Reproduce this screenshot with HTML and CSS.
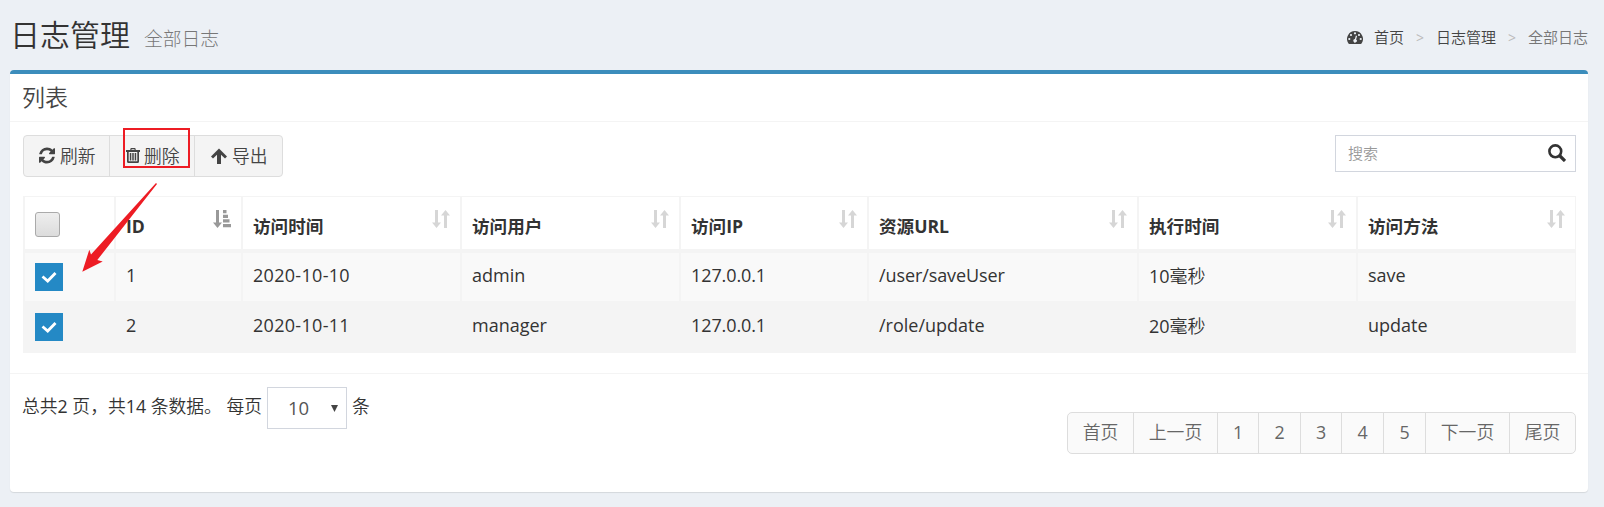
FILE: index.html
```html
<!DOCTYPE html>
<html lang="zh-CN">
<head>
<meta charset="utf-8">
<title>日志管理</title>
<link rel="stylesheet" href="styles.css">
</head>
<body>
<svg class="defs" width="0" height="0">
  <symbol id="sort" viewBox="0 0 18 18"><path d="M3 0h3v12.500h3L4.500 18 0 12.500h3zM12 18h3V5.500h3L13.500 0 9 5.500h3z"/></symbol>
  <symbol id="sorted" viewBox="0 0 18 18"><path d="M3 0h3v12.500h3L4.500 18 0 12.500h3zM10 0h3.500v3.300H10zM10 4.700h5V8h-5zM10 9.300h6.500v3.300H10zM10 14h8v3.300h-8z"/></symbol>
  <symbol id="tick" viewBox="0 0 28 28"><path d="M7.500 13.500l5.200 4.500L20.500 10" fill="none" stroke="#fff" stroke-width="2.800"/></symbol>
</svg>
<header class="page-head">
  <h1>日志管理<small>全部日志</small></h1>
  <nav class="crumbs">
    <svg class="dash" viewBox="0 0 16 13"><path fill="#444" fill-rule="evenodd" d="M8 0a8 8 0 0 1 6.700 12.300q-.4.700-1 .7H2.300q-.6 0-1-.7A8 8 0 0 1 8 0zM8 1.200a1.100 1.100 0 1 0 0 2.200 1.100 1.100 0 0 0 0-2.200zM4 2.900a1.100 1.100 0 1 0 0 2.200 1.100 1.100 0 0 0 0-2.200zM12 2.900a1.100 1.100 0 1 0 0 2.200 1.100 1.100 0 0 0 0-2.200zM2.300 6.900a1.100 1.100 0 1 0 0 2.200 1.100 1.100 0 0 0 0-2.200zM13.700 6.900a1.100 1.100 0 1 0 0 2.200 1.100 1.100 0 0 0 0-2.200zM8.900 4.600l-1 3.500a1.700 1.700 0 1 0 1.200.3l1-3.500z"/></svg>
    <a>首页</a><i>&gt;</i><a>日志管理</a><i>&gt;</i><span>全部日志</span>
  </nav>
</header>
<main class="box">
  <h2>列表</h2>
  <div class="body">
    <div class="tools">
      <div class="buttons">
        <button class="b1"><svg viewBox="0 0 1536 1792"><path d="M1511 1056q0 5-1 7-64 268-268 434.500t-478 166.500q-146 0-282.500-55t-243.500-157l-129 129q-19 19-45 19t-45-19-19-45v-448q0-26 19-45t45-19h448q26 0 45 19t19 45-19 45l-137 137q71 66 161 102t187 36q134 0 250-65t186-179q11-17 53-117 8-23 30-23h192q13 0 22.500 9.500t9.500 22.500zm25-800v448q0 26-19 45t-45 19h-448q-26 0-45-19t-19-45 19-45l138-138q-148-137-349-137-134 0-250 65t-186 179q-11 17-53 117-8 23-30 23h-199q-13 0-22.500-9.500t-9.500-22.500v-7q65-268 270-434.500t480-166.500q146 0 284 55.500t245 156.500l130-129q19-19 45-19t45 19 19 45z"/></svg>刷新</button>
        <button class="b2"><svg viewBox="0 0 14 18"><path fill-rule="evenodd" d="M4.300 3V2.200Q4.300 1 5.500 1h3q1.200 0 1.200 1.200V3H14v2h-1v9.500q0 1.500-1.500 1.500h-9Q1 16 1 14.500V5H0V3zM5.500 3h3v-.8h-3zM2.700 5v9.300h8.600V5z"/><path d="M3.800 6h1.500v7.500H3.800zM6.250 6h1.500v7.500h-1.500zM8.700 6h1.500v7.500H8.700z"/></svg>删除</button>
        <button class="b3"><svg viewBox="0 0 16 18"><path d="M8 1.500l8 8-2 2-4-3.700V17H6V7.800L2 11.500l-2-2z"/></svg>导出</button>
      </div>
      <label class="search"><input placeholder="搜索"><svg viewBox="0 0 18 18"><circle cx="7.300" cy="7.300" r="5.900" fill="none" stroke="#333" stroke-width="2.600"/><path d="M11.500 11.500l5.500 5.500" stroke="#333" stroke-width="3.200"/></svg></label>
    </div>
    <table>
      <colgroup><col class="c91"><col class="c127"><col class="c219"><col class="c219"><col class="c188"><col class="c270"><col class="c219"><col></colgroup>
      <thead><tr>
        <th><span class="check"></span></th>
        <th>ID<svg class="on"><use href="#sorted"/></svg></th>
        <th>访问时间<svg><use href="#sort"/></svg></th>
        <th>访问用户<svg><use href="#sort"/></svg></th>
        <th>访问IP<svg><use href="#sort"/></svg></th>
        <th>资源URL<svg><use href="#sort"/></svg></th>
        <th>执行时间<svg><use href="#sort"/></svg></th>
        <th>访问方法<svg><use href="#sort"/></svg></th>
      </tr></thead>
      <tbody>
        <tr><td><svg class="tick"><use href="#tick"/></svg></td><td>1</td><td class="date">2020-10-10</td><td>admin</td><td class="ip">127.0.0.1</td><td class="url">/user/saveUser</td><td class="ms">10<span>毫秒</span></td><td>save</td></tr>
        <tr><td><svg class="tick"><use href="#tick"/></svg></td><td>2</td><td class="date">2020-10-11</td><td>manager</td><td class="ip">127.0.0.1</td><td>/role/update</td><td class="ms">20<span>毫秒</span></td><td>update</td></tr>
      </tbody>
    </table>
  </div>
  <footer>
    <div class="summary"><span>总共<b>2</b> 页，共<b>14</b> 条数据。 每页</span><span class="select">10<svg viewBox="0 0 7 7"><path d="M0 0h7L3.500 7z"/></svg></span><span>条</span></div>
    <div class="pages"><a class="p1">首页</a><a class="p2">上一页</a><a class="n1">1</a><a class="n2">2</a><a class="n1">3</a><a class="n2">4</a><a class="n2">5</a><a class="p2">下一页</a><a class="p4">尾页</a></div>
  </footer>
</main>
<svg class="marks" viewBox="0 0 200 160"><rect x="24" y="9" width="65" height="38" fill="none" stroke="#ed1c24" stroke-width="2"/><path fill="#ed1c24" d="M56 63l1 1L-2.700 140l5.400 1.500-20.400 10.200 7-22 1.700 4.800z"/></svg>
</body>
</html>
```
FILE: styles.css
```css
* { box-sizing: border-box; }
body {
  margin: 0;
  height: 507px;
  overflow: hidden;
  background: #ecf0f5;
  color: #333;
  font: 18px "Open Sans", "Noto Sans CJK SC", sans-serif;
  padding: 0 16px 0 10px;
}
.defs { position: absolute; }
.page-head { height: 70px; display: flex; justify-content: space-between; }
h1 { margin: 13px 0 0; font-size: 30px; line-height: 44px; font-weight: 350; }
small { margin-left: 14px; font-size: 18.750px; font-weight: 300; color: #777; }
.crumbs { display: flex; align-items: center; height: 24px; margin-top: 24px; font-size: 15px; font-weight: 350; color: #777; }
.crumbs a { color: #444; }
.crumbs i { width: 32px; padding-top: 2px; text-align: center; font-style: normal; font-size: 14px; font-weight: 400; color: #bbb; }
.dash { width: 16px; height: 13px; margin: 3px 11px 0 0; }
.box { height: 422px; border-top: 4px solid #3c8dbc; border-radius: 4px; background: #fff; box-shadow: 0 1px 1px rgba(0,0,0,.1); }
h2 { margin: 0; height: 48px; padding: 10px 12px 0; border-bottom: 1px solid #f4f4f4; font-size: 23px; line-height: 27px; font-weight: 350; color: #444; }
.body { height: 252px; padding: 13px 12px 0 13px; border-bottom: 1px solid #f4f4f4; }
.tools { display: flex; justify-content: space-between; height: 61px; }
.buttons { display: flex; height: 42px; border: 1px solid #ddd; border-radius: 4px; background: #f4f4f4; overflow: hidden; }
button { display: flex; align-items: center; height: 40px; padding: 0 0 3px 15px; border: 0; border-right: 1px solid #ddd; background: none; color: #444; font: 350 17.800px "Open Sans", "Noto Sans CJK SC", sans-serif; }
button svg { position: relative; top: 1px; fill: #444; }
.b1 { width: 86px; }
.b2 { width: 85px; }
.b3 { width: 87px; border: 0; padding-left: 16px; }
.b1 svg { width: 16px; height: 19px; margin-right: 5px; }
.b2 svg { width: 14px; height: 18px; margin: 1px 4px 0 1px; }
.b3 svg { width: 16px; height: 18px; margin-right: 5px; }
.search { display: flex; align-items: center; justify-content: space-between; width: 241px; height: 37px; padding: 0 9px 2px 12px; border: 1px solid #d2d6de; }
.search input { width: 180px; padding: 0; border: 0; outline: 0; font: 350 15px "Noto Sans CJK SC", sans-serif; }
.search input::placeholder { color: #999; }
.search svg { width: 18px; height: 18px; }
table { width: 1553px; table-layout: fixed; border-spacing: 0; border: solid #f4f4f4; border-width: 1px 1px 0 0; }
.c91 { width: 91px; } .c127 { width: 127px; } .c219 { width: 219px; } .c188 { width: 188px; } .c270 { width: 270px; }
th, td { padding: 0 0 0 10px; border-left: 2px solid #f4f4f4; text-align: left; }
th { position: relative; height: 56px; padding-top: 5px; border-bottom: 4px solid #f4f4f4; font-size: 17.600px; font-weight: 700; }
th svg { position: absolute; right: 10px; top: 13px; width: 18px; height: 18px; fill: #d6d6d6; }
th svg.on { fill: #999; }
.check { display: block; width: 25px; height: 25px; margin-top: -2px; border: 1px solid #aaa; border-radius: 3px; background: linear-gradient(#eee, #dcdcdc); }
td { height: 50px; padding-bottom: 4px; background: #f9f9f9; border-bottom: 2px solid #f4f4f4; }
tbody tr + tr td { background: #f4f4f4; }
.date { letter-spacing: .3px; }
.ip { letter-spacing: -.1px; }
.url { letter-spacing: -.1px; }
.ms { padding-bottom: 5px; }
.ms span { font-weight: 350; }
.tick { display: block; width: 28px; height: 28px; background: #2489c5; margin-top: 4px; }
footer { display: flex; justify-content: space-between; padding: 13px 12px 0; }
.summary { display: flex; height: 42px; line-height: 38px; font-size: 17.800px; font-weight: 350; }
.summary b { font-weight: 400; }
.select { display: flex; align-items: center; justify-content: space-between; width: 80px; height: 42px; margin: 0 5px; padding: 0 8px 0 20px; border: 1px solid #d2d6de; font-size: 18.500px; font-weight: 400; color: #555; }
.select svg { width: 7px; height: 7px; fill: #444; }
.pages { display: flex; margin-top: 25px; height: 42px; border: 1px solid #ddd; border-radius: 5px; background: #fafafa; color: #666; font-size: 17.850px; font-weight: 350; line-height: 38px; text-align: center; }
.pages a + a { border-left: 1px solid #ddd; }
.p1 { width: 65px; } .p2 { width: 84px; } .n1 { width: 41px; } .n2 { width: 42px; } .p4 { width: 66px; }
.n1, .n2 { font-weight: 400; }
.marks { position: absolute; left: 100px; top: 120px; width: 200px; height: 160px; overflow: visible; }
```
